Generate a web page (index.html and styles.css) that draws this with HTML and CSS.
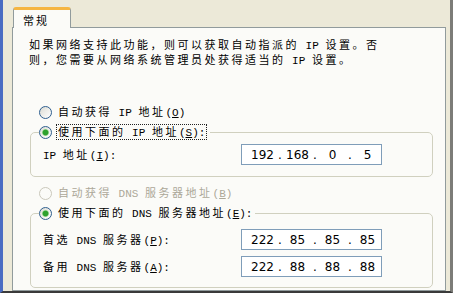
FILE: index.html
```html
<!DOCTYPE html>
<html lang="zh-CN">
<head>
    <meta charset="UTF-8">
    <meta name="viewport" content="width=device-width, initial-scale=1.0">
    <title>Internet 协议 (TCP/IP) 属性</title>
    <link rel="stylesheet" href="styles.css">
</head>
<body>
    <div class="window">
        <div class="tabs">
            <div class="tab">常规</div>
        </div>

        <div class="page">
            <p class="intro">如果网络支持此功能，则可以获取自动指派的<span class="en"> IP </span>设置。否<br>则，您需要从网络系统管理员处获得适当的<span class="en"> IP </span>设置。</p>

            <div class="radio-row">
                <span class="radio"></span>
                <span>自动获得<span class="en"> IP </span>地址<span class="en">(<u>O</u>)</span></span>
            </div>

            <fieldset class="group">
                <legend class="radio-row">
                    <span class="radio checked"></span>
                    <span class="focus">使用下面的<span class="en"> IP </span>地址<span class="en">(<u>S</u>):</span></span>
                </legend>
                <div class="field">
                    <span><span class="en">IP </span>地址<span class="en">(<u>I</u>):</span></span>
                    <div class="ip">
                        <span class="octet">192</span><span class="dot">.</span>
                        <span class="octet">168</span><span class="dot">.</span>
                        <span class="octet">0</span><span class="dot">.</span>
                        <span class="octet">5</span>
                    </div>
                </div>
            </fieldset>

            <div class="radio-row disabled dns-auto">
                <span class="radio"></span>
                <span>自动获得<span class="en"> DNS </span>服务器地址<span class="en">(<u>B</u>)</span></span>
            </div>

            <fieldset class="group dns">
                <legend class="radio-row">
                    <span class="radio checked"></span>
                    <span>使用下面的<span class="en"> DNS </span>服务器地址<span class="en">(<u>E</u>):</span></span>
                </legend>
                <div class="field">
                    <span>首选<span class="en"> DNS </span>服务器<span class="en">(<u>P</u>):</span></span>
                    <div class="ip">
                        <span class="octet">222</span><span class="dot">.</span>
                        <span class="octet">85</span><span class="dot">.</span>
                        <span class="octet">85</span><span class="dot">.</span>
                        <span class="octet">85</span>
                    </div>
                </div>
                <div class="field">
                    <span>备用<span class="en"> DNS </span>服务器<span class="en">(<u>A</u>):</span></span>
                    <div class="ip">
                        <span class="octet">222</span><span class="dot">.</span>
                        <span class="octet">88</span><span class="dot">.</span>
                        <span class="octet">88</span><span class="dot">.</span>
                        <span class="octet">88</span>
                    </div>
                </div>
            </fieldset>
        </div>
    </div>
</body>
</html>
```

FILE: styles.css
```css
body {
    margin: 0;
    background-color: #ffffff;
    font-family: 'Noto Sans CJK SC', sans-serif;
    font-size: 11px;
    color: #000;
}
.window {
    box-sizing: border-box;
    width: 453px;
    height: 293px;
    padding: 7px 4px 0 9px;
    background-color: #ece9d8;
    border-left: 3px solid #4a6cc2;
    border-right: 3px solid #7c7c78;
    border-bottom: 2px solid #3a3a3a;
}
.tabs {
    display: flex;
    height: 20px;
}
.tab {
    box-sizing: border-box;
    width: 58px;
    height: 21px;
    margin-left: 1px;
    padding: 2px 0 0 9px;
    background-color: #fbfbf8;
    border: 1px solid #919b9c;
    border-bottom: none;
    border-top: 3px solid #f5b541;
    border-radius: 3px 3px 0 0;
    letter-spacing: 2px;
    position: relative;
    z-index: 1;
}
.page {
    box-sizing: border-box;
    height: 264px;
    padding: 10px 0 0 16px;
    background-color: #fbfbf8;
    border: 1px solid #919b9c;
}
.intro {
    height: 26px;
    margin: 0 0 38px;
    line-height: 13px;
    letter-spacing: 2.5px;
    white-space: nowrap;
}
.en {
    font-family: 'Liberation Mono', monospace;
    font-size: 11px;
    letter-spacing: 0;
}
.radio-row {
    display: flex;
    align-items: center;
    gap: 6px;
    height: 20px;
    padding-left: 10px;
    line-height: 12px;
    letter-spacing: 2.5px;
    white-space: nowrap;
}
.radio {
    box-sizing: border-box;
    flex: 0 0 13px;
    height: 13px;
    border-radius: 50%;
    border: 1px solid #2f5f8f;
    background: linear-gradient(135deg, #dcdcd4, #ffffff);
}
.radio.checked {
    background:
        radial-gradient(circle, #2ea12e 0 2.5px, #9fd89a 3.2px, transparent 3.8px),
        linear-gradient(135deg, #dcdcd4, #ffffff);
}
.disabled {
    color: #aca899;
}
.disabled .radio {
    border-color: #cac8bb;
    background: #fbfbf8;
}
.focus {
    border: 1px dotted #222;
    padding: 0 1px;
    margin-left: -2px;
}
.group {
    box-sizing: border-box;
    width: 403px;
    min-width: 0;
    margin: 0 0 0 1px;
    padding: 0 0 11px 8px;
    border: 1px solid #d0d0bf;
    border-radius: 5px;
}
.group legend {
    padding: 0 3px 0 0;
    background-color: #fbfbf8;
}
.field {
    display: grid;
    grid-template-columns: 198px 141px;
    align-items: center;
    margin-top: 2px;
    padding-left: 4px;
    line-height: 12px;
    letter-spacing: 2.5px;
    white-space: nowrap;
}
.dns .field {
    margin-top: 6px;
}
.dns {
    padding-bottom: 10px;
}
.dns-auto {
    margin-top: 6px;
}
.ip {
    box-sizing: border-box;
    display: flex;
    align-items: center;
    height: 21px;
    padding-left: 7px;
    background-color: #ffffff;
    border: 1px solid #7f9db9;
    font-family: 'DejaVu Sans', sans-serif;
    font-size: 12px;
    letter-spacing: 0;
}
.octet {
    width: 27px;
    text-align: center;
}
.dot {
    width: 8px;
    text-align: center;
}
```
